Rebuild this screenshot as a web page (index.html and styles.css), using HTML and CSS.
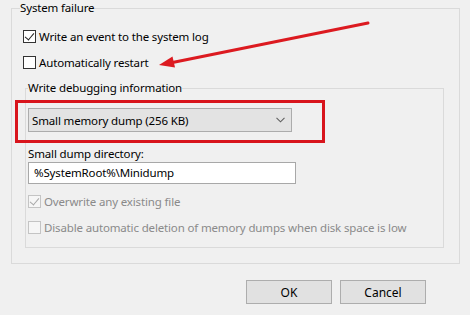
FILE: index.html
```html
<!DOCTYPE html>
<html lang="en">
<head>
  <meta charset="UTF-8">
  <title>Startup and Recovery</title>
  <link rel="stylesheet" href="styles.css">
</head>
<body>
<div class="page">
  <fieldset class="group outer">
    <legend>System failure</legend>
    <label class="check"><span class="box checked"></span>Write an event to the system log</label>
    <label class="check"><span class="box"></span>Automatically restart</label>

    <fieldset class="group inner">
      <legend>Write debugging information</legend>
      <div class="select">
        <span>Small memory dump (256 KB)</span>
        <svg class="chev" width="9" height="6" viewBox="0 0 9 6"><path d="M0.5 0.8 L4.5 4.8 L8.5 0.8" fill="none" stroke="#606060" stroke-width="1.1"/></svg>
      </div>
      <div class="field-label">Small dump directory:</div>
      <div class="input">%SystemRoot%\Minidump</div>
      <label class="check disabled"><span class="box checked"></span>Overwrite any existing file</label>
      <label class="check disabled"><span class="box"></span>Disable automatic deletion of memory dumps when disk space is low</label>
    </fieldset>
  </fieldset>

  <div class="buttons">
    <button class="btn">OK</button>
    <button class="btn">Cancel</button>
  </div>

  <!-- red annotation drawn over the dialog -->
  <svg class="marks" width="470" height="315" viewBox="0 0 470 315">
    <line x1="368" y1="23" x2="170" y2="63" stroke="#dc1a20" stroke-width="3" stroke-linecap="round"/>
    <polygon points="159,65 175,67.5 172.5,56.5" fill="#dc1a20"/>
    <rect x="16.5" y="101.5" width="307" height="40" fill="none" stroke="#d8141c" stroke-width="3"/>
  </svg>
</div>
</body>
</html>
```

FILE: styles.css
```css
* {
  margin: 0;
  padding: 0;
  box-sizing: border-box;
}

body {
  background-color: #f0f0f0;
  font-family: "Noto Sans", "Open Sans", sans-serif;
  font-size: 11.5px;
  letter-spacing: -0.15px;
  color: #000;
}

.page {
  position: relative;
  width: 470px;
  height: 315px;
  overflow: hidden;
}

.group {
  border: 1px solid #dadada;
  min-width: 0;
}

.group legend {
  line-height: 16px;
  height: 16px;
  padding: 0;
}

.outer {
  width: 449px;
  margin-left: 11px;
  padding: 7px 8px 15px 8px;
}

.inner {
  width: 419px;
  margin: 5px 0 0 5px;
  padding: 12px 2px 7px 2px;
}

.check {
  display: flex;
  align-items: center;
  height: 26px;
  padding-left: 3px;
  white-space: nowrap;
}

.inner .check {
  padding-left: 0;
}

.box {
  width: 13px;
  height: 13px;
  border: 1px solid #333;
  background-color: #fff;
  margin-right: 3px;
  position: relative;
  flex: none;
}

.box.checked::after {
  content: "";
  position: absolute;
  left: 3px;
  top: 0px;
  width: 4px;
  height: 8px;
  border-right: 1.5px solid #222;
  border-bottom: 1.5px solid #222;
  transform: rotate(40deg);
}

.disabled {
  color: #8a8a8a;
}

.disabled .box {
  border-color: #c4c4c4;
  background-color: #f6f6f6;
}

.disabled .box.checked::after {
  border-color: #a8a8a8;
}

.select {
  width: 264px;
  height: 24px;
  background-color: #e3e3e3;
  border: 1px solid #acacac;
  display: flex;
  align-items: center;
  justify-content: space-between;
  padding: 0 6px 0 3px;
}

.field-label {
  margin-top: 14px;
  line-height: 16px;
}

.input {
  width: 268px;
  height: 22px;
  background-color: #fff;
  border: 1px solid #a8a8a8;
  padding-left: 5px;
  line-height: 20px;
  margin-bottom: 4px;
}

.buttons {
  display: flex;
  justify-content: flex-end;
  gap: 8px;
  margin: 16px 44px 0 0;
}

.btn {
  width: 86px;
  height: 24px;
  background-color: #e1e1e1;
  border: 1px solid #adadad;
  font-family: inherit;
  font-size: 12px;
  color: #000;
}

.marks {
  position: absolute;
  top: 0;
  left: 0;
  pointer-events: none;
}
```
